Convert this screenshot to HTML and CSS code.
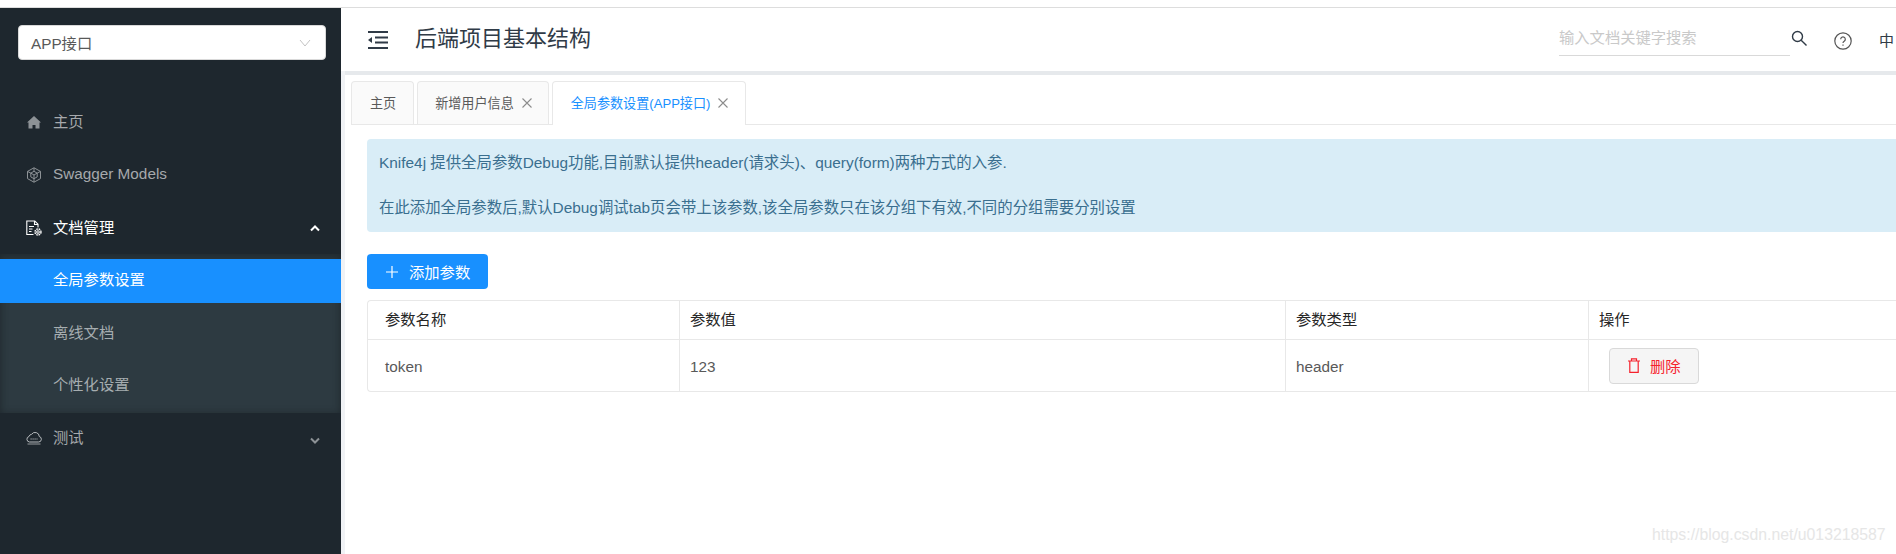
FILE: index.html
```html
<!DOCTYPE html>
<html lang="zh-CN">
<head>
<meta charset="utf-8">
<title>全局参数设置</title>
<link rel="stylesheet" href="styles.css">
</head>
<body>
<div class="top-strip"></div>
<div class="app">
  <aside class="sidebar">
    <div class="select">
      <span class="select-label">APP接口</span>
      <svg class="select-arrow" width="12" height="8" viewBox="0 0 12 8"><path d="M1 1l5 6 5-6" fill="none" stroke="#c4c4c4" stroke-width="1"/></svg>
    </div>
    <nav class="menu">
      <div class="item">
        <svg class="ico" width="16" height="16" viewBox="0 0 16 16"><path d="M8 2L1 8.500h1.500V14.500h4V11h3v3.500h4V8.500H15z" fill="#8d9296"/></svg>
        <span class="label cjk">主页</span>
      </div>
      <div class="item">
        <svg class="ico" width="16" height="16" viewBox="0 0 16 16" fill="none" stroke="#8d9296" stroke-width="1"><path d="M8 .8l6.500 3.600v7.200L8 15.200l-6.500-3.600V4.400z"/><path d="M8 4.300l3.200 1.800v3.800L8 11.700 4.800 9.900V6.100zM1.500 4.400l3.300 1.700M14.500 4.400l-3.300 1.700M8 15.200v-3.500M8 .8v3.500M4.800 6.100L8 8l3.200-1.900M8 8v3.700"/></svg>
        <span class="label">Swagger Models</span>
      </div>
      <div class="item open">
        <svg class="ico" width="16" height="16" viewBox="0 0 16 16" fill="none" stroke="#fff" stroke-width="1.100"><path d="M7.500 14.500H.8V1h8l3.200 3.200V7.500"/><path d="M8.500 1v3.500H12" /><path d="M3 6.500h5M3 9h3.500M3 11.500h2.500"/><circle cx="12" cy="12" r="1.300"/><circle cx="12" cy="12" r="3" stroke-dasharray="1.600 .8" stroke-width="1.400"/></svg>
        <span class="label cjk">文档管理</span>
        <svg class="chev" width="10" height="7" viewBox="0 0 10 7"><path d="M1 5.500l4-4 4 4" fill="none" stroke="#fff" stroke-width="2"/></svg>
      </div>
      <div class="submenu">
        <div class="sub active"><span class="label">全局参数设置</span></div>
        <div class="sub"><span class="label">离线文档</span></div>
        <div class="sub"><span class="label">个性化设置</span></div>
      </div>
      <div class="item last">
        <svg class="ico" width="16" height="14" viewBox="0 0 16 14" fill="none" stroke="#b6babd" stroke-width="1"><path d="M3.500 11h9a2.800 2.800 0 0 0 .8-5.500 4.200 4.200 0 0 0-7.700-2.200A3 3 0 0 0 3 5.500a2.800 2.800 0 0 0 .5 5.500z"/><path d="M4.500 8h7" stroke-dasharray="1.200 .8"/><path d="M1.500 13h13" stroke-width=".8"/></svg>
        <span class="label cjk">测试</span>
        <svg class="chev" width="10" height="7" viewBox="0 0 10 7"><path d="M1 1.500l4 4 4-4" fill="none" stroke="#8d9296" stroke-width="2"/></svg>
      </div>
    </nav>
  </aside>
  <main class="main">
    <header class="header">
      <svg class="fold" width="20" height="18" viewBox="0 0 20 18"><path d="M0 1h20M7 6.500h13M7 11.500h13M0 17h20" stroke="#303b47" stroke-width="2" fill="none"/><path d="M0 9l4-3v6z" fill="#303b47"/></svg>
      <h1 class="title">后端项目基本结构</h1>
      <div class="search">输入文档关键字搜索</div>
      <svg class="search-ico" width="16" height="16" viewBox="0 0 16 16" fill="none" stroke="#303b47" stroke-width="1.400"><circle cx="6.500" cy="6.500" r="5"/><path d="M10.200 10.200L15.500 15.500"/></svg>
      <svg class="help" width="18" height="18" viewBox="0 0 18 18" fill="none" stroke="#555" stroke-width="1.200"><circle cx="9" cy="9" r="8.200"/><path d="M6.700 7.200a2.300 2.300 0 1 1 3.500 2c-.8.500-1.200.9-1.200 1.800"/><path d="M9 12.400v1.400"/></svg>
      <span class="lang">中</span>
    </header>
    <div class="content">
      <div class="tabs">
        <div class="tab">主页</div>
        <div class="tab tab-tight">新增用户信息<svg class="close" width="10" height="10" viewBox="0 0 10 10"><path d="M.5.500l9 9M9.500.500l-9 9" stroke="#8c8c8c" stroke-width="1.100"/></svg></div>
        <div class="tab current">全局参数设置(APP接口)<svg class="close" width="10" height="10" viewBox="0 0 10 10"><path d="M.5.500l9 9M9.500.500l-9 9" stroke="#8c8c8c" stroke-width="1.100"/></svg></div>
      </div>
      <div class="pane">
        <div class="alert">
          <p>Knife4j 提供全局参数Debug功能,目前默认提供header(请求头)、query(form)两种方式的入参.</p>
          <p>在此添加全局参数后,默认Debug调试tab页会带上该参数,该全局参数只在该分组下有效,不同的分组需要分别设置</p>
        </div>
        <button class="add"><svg width="12" height="12" viewBox="0 0 12 12"><path d="M6 0v12M0 6h12" stroke="#fff" stroke-width="1.200"/></svg><span class="add-label">添加参数</span></button>
        <table class="grid">
          <colgroup><col class="c1"><col class="c2"><col class="c3"><col class="c4"></colgroup>
          <thead><tr><th>参数名称</th><th>参数值</th><th>参数类型</th><th>操作</th></tr></thead>
          <tbody><tr><td>token</td><td>123</td><td>header</td><td class="ops"><button class="del"><svg width="12" height="15" viewBox="0 0 12 15" fill="none" stroke="#f5222d" stroke-width="1.200"><path d="M0 3h12M3.500 3V.8h5V3M1.800 3v11.300h8.400V3"/></svg><span class="add-label">删除</span></button></td></tr></tbody>
        </table>
      </div>
    </div>
  </main>
</div>
<div class="watermark">https://blog.csdn.net/u013218587</div>
</body>
</html>
```
FILE: styles.css
```css
* { box-sizing: border-box; }
html, body { margin: 0; height: 554px; overflow: hidden; background: #fff; }
body {
  position: relative;
  font-family: "Liberation Sans", "Noto Sans CJK SC", sans-serif;
  font-size: 15.3px;
  color: #595959;
}
.top-strip { height: 8px; background: #fff; border-bottom: 1px solid #ddd; }
.app { display: flex; height: 546px; }

.sidebar { width: 341px; flex: none; background: #1e272e; padding-top: 17px; }
.select {
  display: flex; align-items: center; justify-content: space-between;
  width: 308px; height: 35px; margin-left: 18px; padding: 0 14px 2px 12px;
  background: #fff; border: 1px solid #d9d9d9; border-radius: 4px; color: #595959;
}
.select-arrow { margin-top: 2px; }
.menu { margin-top: 35px; color: #a6a9ac; }
.item { position: relative; display: flex; align-items: center; height: 53px; padding-left: 26px; }
.item .ico { margin-right: 11px; flex: none; }
.label { position: relative; top: -1px; }
.label.cjk { top: -2px; }
.item.open { color: #fff; }
.item.last { height: 51px; }
.chev { position: absolute; right: 21px; top: 24px; }
.submenu {
  background: #2d3a41;
  box-shadow: inset 0 4px 8px rgba(0, 0, 0, .25), inset 0 -2px 6px rgba(0, 0, 0, .1);
  padding: 5px 0 4.500px;
}
.sub { height: 44px; line-height: 44px; padding-left: 53px; margin-bottom: 8.500px; color: #a6adb0; }
.sub:last-child { margin-bottom: 0; }
.sub.active { background: #1890ff; color: #fff; }

.main { flex: 1; min-width: 0; background: #f0f2f5; }
.header { display: flex; align-items: center; height: 63px; padding-left: 27px; background: #fff; }
.fold { flex: none; }
.title { margin: 0 0 0 27px; font-size: 22px; font-weight: 400; color: #303b47; flex: 1; line-height: 30px; position: relative; top: -1px; }
.search { width: 231px; height: 33px; line-height: 30px; color: #c9c9c9; border-bottom: 1px solid #d9d9d9; }
.search-ico { margin: -4px 0 0 1px; flex: none; }
.help { margin: 2px 0 0 27px; flex: none; }
.lang { margin: 0 2px 0 27px; color: #303b47; font-size: 15px; }

.content { height: 483px; margin: 4px 0 0 4px; background: #fff; padding: 6px 0 0 6px; box-shadow: 0 -4px 0 #e6e9ec; }
.tabs { display: flex; gap: 3px; height: 44px; border-bottom: 1px solid #e8e8e8; }
.tab {
  display: flex; align-items: center;
  height: 43px; padding: 0 17px 1px 18px; font-size: 13.100px; color: #595959;
  background: #fafafa; border: 1px solid #e8e8e8; border-bottom: 0; border-radius: 4px 4px 0 0;
}
.tab.tab-tight { padding-left: 17px; padding-right: 16px; }
.tab.current { background: #fff; color: #1890ff; height: 44px; padding-bottom: 2px; }
.close { margin-left: 8px; flex: none; }
.pane { padding: 14px 0 0 16px; }
.alert { height: 93px; padding: 14px 12px; background: #d9edf7; color: #3a6f8f; border-radius: 4px 0 0 4px; font-size: 15.400px; }
.alert p { margin: 0 0 25px; line-height: 20px; }
.add {
  display: flex; align-items: center; gap: 11px; width: 121px; height: 35px; margin-top: 22px; padding: 0 0 0 19px;
  font: inherit; color: #fff; background: #1890ff; border: 0; border-radius: 4px;
}
.add-label { position: relative; top: -1px; }
.grid { width: 1529px; margin-top: 11px; table-layout: fixed; border-collapse: separate; border-spacing: 0; border: 1px solid #e8e8e8; border-right: 0; border-radius: 4px 0 0 4px; }
.c1 { width: 312px; } .c2 { width: 606px; } .c3 { width: 303px; } .c4 { width: 307px; }
.grid th, .grid td { padding: 0 0 0 10px; border-right: 1px solid #e8e8e8; font-weight: 400; text-align: left; }
.grid th:last-child, .grid td:last-child { border-right: 0; }
.grid th { height: 39px; padding-bottom: 4px; color: #262626; border-bottom: 1px solid #e8e8e8; }
.grid th:first-child, .grid td:first-child { padding-left: 17px; }
.grid td { height: 51px; padding-top: 2px; color: #595959; }
.grid td.ops { padding: 0 0 0 20px; }
.del {
  display: flex; align-items: center; gap: 10px; width: 90px; height: 36px; padding: 0 0 0 18px;
  font: inherit; color: #f5222d; background: #f5f5f5; border: 1px solid #d9d9d9; border-radius: 4px;
}
.watermark { position: absolute; left: 1652px; top: 526px; font-size: 15.800px; color: #e6e6e6; white-space: nowrap; }
```
